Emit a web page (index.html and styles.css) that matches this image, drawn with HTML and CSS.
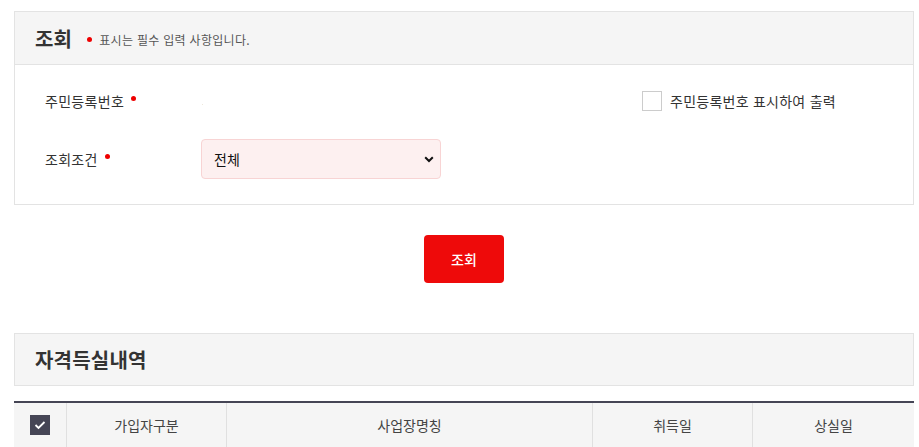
FILE: index.html
```html
<!DOCTYPE html>
<html lang="ko">
<head>
<meta charset="utf-8">
<link rel="stylesheet" href="styles.css">
</head>
<body>
<div class="page">
  <section class="panel">
    <div class="panel-head">
      <h2 class="title">조회</h2>
      <span class="note"><i class="dot"></i>표시는 필수 입력 사항입니다.</span>
    </div>
    <div class="panel-body">
      <div class="row">
        <span class="label">주민등록번호<i class="dot"></i></span>
        <span class="field-empty"><span class="tick"></span></span>
        <label class="check"><span class="box"></span>주민등록번호 표시하여 출력</label>
      </div>
      <div class="row">
        <span class="label">조회조건<i class="dot"></i></span>
        <div class="select">
          <span>전체</span>
          <svg width="10" height="7" viewBox="0 0 10 7"><path d="M1.2 1.3 L5 5 L8.8 1.3" fill="none" stroke="#111" stroke-width="2"/></svg>
        </div>
      </div>
    </div>
  </section>

  <div class="actions"><button class="btn">조회</button></div>

  <section class="box-title">
    <h2 class="title">자격득실내역</h2>
  </section>

  <div class="table">
    <div class="cell c1"><span class="chk"><svg width="12" height="10" viewBox="0 0 12 10"><path d="M1.5 5 L4.5 8 L10.5 2" fill="none" stroke="#fff" stroke-width="1.8"/></svg></span></div>
    <div class="cell c2">가입자구분</div>
    <div class="cell c3">사업장명칭</div>
    <div class="cell c4">취득일</div>
    <div class="cell c5">상실일</div>
  </div>
</div>
</body>
</html>
```

FILE: styles.css
```css
* { box-sizing: border-box; }
html, body { margin: 0; padding: 0; background: #fff; }
body {
  font-family: "Noto Sans CJK KR", "Noto Sans", sans-serif;
  color: #333;
}
.page {
  width: 900px;
  margin-left: 14px;
  padding-top: 11px;
}
.panel {
  border: 1px solid #e3e3e3;
}
.panel-head {
  height: 53px;
  background: #f5f5f5;
  border-bottom: 1px solid #e3e3e3;
  display: flex;
  align-items: center;
  padding: 0 20px;
}
.title {
  margin: 0;
  font-size: 20px;
  font-weight: 700;
  color: #333;
  letter-spacing: 0.2px;
}
.note {
  display: inline-flex;
  align-items: center;
  margin-left: 15px;
  margin-top: 3px;
  font-size: 12px;
  color: #555;
  letter-spacing: 0.3px;
}
.note .dot { margin: 0 7px 0 0; }
.dot {
  display: inline-block;
  width: 5px;
  height: 5px;
  border-radius: 50%;
  background: #ee0000;
  margin-left: 7px;
  vertical-align: middle;
}
.panel-body {
  padding: 16px 30px 25px;
  display: flex;
  flex-direction: column;
  gap: 18px;
}
.row {
  display: flex;
  align-items: center;
  height: 40px;
}
.label {
  width: 156px;
  font-size: 14px;
  color: #333;
  display: inline-flex;
  align-items: center;
  letter-spacing: 0.3px;
}
.label .dot { position: relative; top: -3px; }
.field-empty {
  width: 441px;
  height: 40px;
  position: relative;
}
.tick {
  position: absolute;
  left: 1px;
  top: 23px;
  width: 1px;
  height: 1px;
  background: #eee8dc;
}
.check {
  display: inline-flex;
  align-items: center;
  font-size: 14px;
  color: #333;
  letter-spacing: 0.25px;
}
.box {
  width: 20px;
  height: 20px;
  border: 1px solid #ccc;
  background: #fff;
  margin-right: 8px;
}
.select {
  width: 240px;
  height: 40px;
  background: #fdf0f0;
  border: 1px solid #f8d4d4;
  border-radius: 4px;
  display: flex;
  align-items: center;
  justify-content: space-between;
  padding: 0 6px 0 12px;
  font-size: 14px;
  color: #111;
}
.actions {
  display: flex;
  justify-content: center;
  padding: 30px 0 50px;
}
.btn {
  width: 80px;
  height: 48px;
  border: 0;
  border-radius: 4px;
  background: #ee0a0a;
  color: #fff;
  font-family: inherit;
  font-size: 14px;
  font-weight: 500;
}
.box-title {
  height: 53px;
  background: #f5f5f5;
  border: 1px solid #e3e3e3;
  display: flex;
  align-items: center;
  padding: 0 20px;
}
.table {
  margin-top: 15px;
  border-top: 2px solid #454555;
  display: grid;
  grid-template-columns: 53px 160px 366px 160px 161px;
  background: #f5f5f5;
}
.cell {
  height: 44px;
  display: flex;
  align-items: center;
  justify-content: center;
  font-size: 14px;
  color: #444;
  border-right: 1px solid #e0e0e0;
}
.cell.c1 { padding-right: 1px; }
.cell.c5 { border-right: 0; }
.chk {
  width: 20px;
  height: 20px;
  background: #454555;
  display: flex;
  align-items: center;
  justify-content: center;
}
```
